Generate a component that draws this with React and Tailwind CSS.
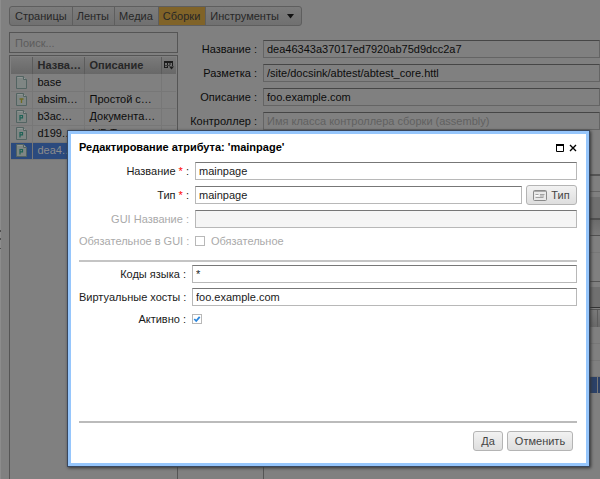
import React from "react";
import { clsx } from "clsx";

const tabs = ["Страницы", "Ленты", "Медиа", "Сборки"];

const assemblies = [
  { name: "base", desc: "", mark: "" },
  { name: "absim…", desc: "Простой с…", mark: "T" },
  { name: "b3ac…", desc: "Документа…", mark: "P" },
  { name: "d199.…", desc: "A/B Т…", mark: "P" },
  { name: "dea4.…", desc: "", mark: "P", selected: true },
];

const fields = [
  { id: "asm-name", label: "Название :", value: "dea46343a37017ed7920ab75d9dcc2a7" },
  { id: "asm-core", label: "Разметка :", value: "/site/docsink/abtest/abtest_core.httl" },
  { id: "asm-desc", label: "Описание :", value: "foo.example.com" },
  { id: "asm-ctl", label: "Контроллер :", value: "", placeholder: "Имя класса контроллера сборки (assembly)" },
];

const dimInput =
  "h-[18px] w-full min-w-0 border border-[#646464] border-t-[#464646] bg-[#808080] px-[3px] text-[11px] text-[#0c0c0c] outline-none placeholder:text-[#606060]";
const dialogInput =
  "h-[18px] w-full min-w-0 border border-[#b8b8b8] border-t-[#777] bg-white px-[3px] text-[11px] text-[#1a1a1a] outline-none disabled:bg-[#f5f5f5]";
const dialogButton =
  "flex h-5 items-center justify-center rounded-[3px] border border-[#b4b4b4] bg-linear-to-b from-[#f2f2f2] to-[#dedede] text-[#444]";

function FileIcon({ mark }) {
  return (
    <svg width="11" height="13" viewBox="0 0 11 13" aria-hidden="true">
      <path d="M.5.5h7l3 3v9H.5z" fill="#7f8684" stroke="#536462" />
      <path d="M1.500 1.500h5" stroke="#8f9694" />
      <path d="M7.500.5v3h3" fill="#959b99" stroke="#536462" />
      {mark === "P" && <path d="M4 10.500V5.500h2.500v2.300H4.500" fill="none" stroke="#1f6256" strokeWidth="1.200" />}
      {mark === "T" && <path d="M3.500 6h4M5.500 6v4" fill="none" stroke="#6e6a22" strokeWidth="1.300" />}
    </svg>
  );
}

function ColumnsIcon() {
  return (
    <svg width="10" height="9" viewBox="0 0 10 9" aria-hidden="true">
      <path d="M.5 7V.5h8V5M3.500 1v6M6 1v3M.5 6.500h3.500" fill="none" stroke="#1c1c1c" />
      <path d="M0 1h9" stroke="#1c1c1c" strokeWidth="2" />
      <path d="M1 4.500h5" stroke="#3c3c3c" />
      <path d="M5 5.500h5L7.500 8.500z" fill="#1c1c1c" />
    </svg>
  );
}

function CardIcon() {
  return (
    <svg width="14" height="11" viewBox="0 0 14 11" aria-hidden="true">
      <rect x=".5" y=".5" width="13" height="10" rx="1" fill="#e9e9e9" stroke="#8a8a8a" />
      <path d="M1 1.500h12" stroke="#aaa" />
      <path d="M2.500 4.500h3M2.500 7.500h8M7 4.500h4.500M7 6h4" stroke="#a2a2a2" />
      <path d="M2.500 5.500h3" stroke="#fff" />
    </svg>
  );
}

function Check({ id, checked, disabled }) {
  return (
    <span className="relative flex size-[10px]">
      <input
        id={id}
        type="checkbox"
        defaultChecked={checked}
        disabled={disabled}
        className="peer size-[10px] appearance-none border border-[#b8b8b8] bg-white"
      />
      <svg
        viewBox="0 0 10 10"
        aria-hidden="true"
        className="pointer-events-none absolute inset-0 hidden size-[10px] peer-checked:block"
      >
        <path d="M2.300 5l1.900 2L7.700 2.800" fill="none" stroke="#2a86dc" strokeWidth="1.800" />
      </svg>
    </span>
  );
}

function Label({ htmlFor, children, required, muted }) {
  return (
    <label htmlFor={htmlFor} className={clsx("text-right whitespace-nowrap", muted ? "text-[#aaa]" : "text-[#1a1a1a]")}>
      {children}
      {required && <span className="text-[#f00]"> *</span>} :
    </label>
  );
}

function Toolbar() {
  return (
    <nav className="ml-[9px] flex h-5 w-fit overflow-hidden rounded-[3px] border border-[#5e5e5e] bg-linear-to-b from-[#7c7c7c] to-[#707070] text-[#272727]">
      {tabs.map((t) => (
        <button
          key={t}
          type="button"
          className={clsx("border-r border-[#5e5e5e] pr-[5px] pl-1 first:pl-[5px]", t === "Сборки" && "bg-[#806328]")}
        >
          {t}
        </button>
      ))}
      <button type="button" className="flex items-center gap-2 pr-[7px] pl-1">
        Инструменты
        <svg width="7" height="5" viewBox="0 0 7 5" aria-hidden="true">
          <path d="M0 0h7L3.500 4.500z" fill="#111" />
        </svg>
      </button>
    </nav>
  );
}

function AssemblyList() {
  return (
    <aside className="flex w-[169px] shrink-0 flex-col gap-[2px]">
      <input
        type="search"
        aria-label="Поиск"
        placeholder="Поиск..."
        className="h-[21px] w-full border border-[#555] bg-[#808080] px-[5px] text-[11px] outline-none placeholder:text-[#5c5c5c]"
      />
      <div className="flex-1 border border-b-0 border-[#555] p-px">
        <table className="w-full table-fixed border-collapse">
          <colgroup>
            <col className="w-[21px]" />
            <col className="w-[52px]" />
            <col />
            <col className="w-[15px]" />
          </colgroup>
          <thead>
            <tr className="h-[17px] bg-linear-to-b from-[#7a7a7a] to-[#686868] text-left text-[#272727]">
              <th className="border-r border-[#5c5c5c]" />
              <th className="truncate border-r border-[#5c5c5c] pl-[5px]">Назва…</th>
              <th className="border-r border-[#5c5c5c] pl-[5px]">Описание</th>
              <th>
                <div className="flex justify-center">
                  <ColumnsIcon />
                </div>
              </th>
            </tr>
          </thead>
          <tbody>
            {assemblies.map((a) => (
              <tr
                key={a.name}
                className={clsx("h-[17px] border-b border-[#777]", a.selected ? "bg-[#2b4a7e] text-[#8c8c8c]" : "text-[#0c0c0c]")}
              >
                <td className="border-r border-[#777] p-0">
                  <div className="flex justify-center">
                    <FileIcon mark={a.mark} />
                  </div>
                </td>
                <td className="overflow-hidden border-r border-[#777] p-0 pl-[5px] whitespace-nowrap">{a.name}</td>
                <td className="overflow-hidden border-r border-[#777] p-0 pl-[5px] whitespace-nowrap">{a.desc}</td>
                <td className="p-0" />
              </tr>
            ))}
          </tbody>
        </table>
      </div>
    </aside>
  );
}

function AssemblyEditor() {
  return (
    <main className="flex min-w-0 flex-1 flex-col pt-2">
      <form className="grid grid-cols-[79px_1fr] items-center gap-x-[6px] gap-y-[6px]">
        {fields.map((f) => (
          <React.Fragment key={f.id}>
            <label htmlFor={f.id} className="text-right text-[#0c0c0c]">
              {f.label}
            </label>
            <input id={f.id} defaultValue={f.value} placeholder={f.placeholder} className={dimInput} />
          </React.Fragment>
        ))}
      </form>
      <div className="mt-11 ml-[85px] flex flex-1 flex-col border-l border-[#555]">
        <div className="h-[18px] border-t-2 border-b border-[#555] border-b-[#646464]" />
        <div className="mt-[5px] h-[21px] bg-[#707070]" />
        <div className="h-[18px] border-t-2 border-b border-[#505050] bg-linear-to-b from-[#6c6c6c] to-[#7a7a7a]" />
        <div className="h-[17px] border-b border-[#777]" />
        <div className="h-[29px] border-b border-[#555]" />
        <div className="mt-[5px] h-[21px] border-b border-[#333] bg-[#707070]" />
        <div className="mt-px flex h-[18px] justify-end border-t border-[#555] bg-linear-to-b from-[#7a7a7a] to-[#686868] pr-[2px]">
          <div className="border-r border-[#5c5c5c]" />
        </div>
        <div className="h-[17px] border-b border-[#777]" />
        <div className="h-[17px] border-b border-[#777]" />
        <div className="h-4 border-b border-[#777]" />
        <div className="flex h-4 justify-end bg-[#2b4168] pr-[2px]">
          <div className="border-r border-[#777]" />
        </div>
      </div>
    </main>
  );
}

function AttributeDialog() {
  return (
    <section
      role="dialog"
      aria-labelledby="dialog-title"
      className="absolute top-[130px] right-[10px] left-[67px] border border-[#39485f] bg-white shadow-[1px_1px_3px_#333]"
    >
      <div className="flex flex-col border-[3px] border-[#96c6fc] pt-[7px] pr-[9px] pb-3 pl-2">
        <header className="flex h-[13px] items-center justify-between">
          <h1 id="dialog-title" className="font-bold text-black">
            Редактирование атрибута: 'mainpage'
          </h1>
          <div className="flex gap-[5px]">
            <button type="button" aria-label="Развернуть">
              <svg width="8" height="8" viewBox="0 0 8 8" className="block">
                <path d="M.5 1v6.500h7V1" fill="none" stroke="#000" />
                <path d="M0 1h8" stroke="#000" strokeWidth="2" />
              </svg>
            </button>
            <button type="button" aria-label="Закрыть">
              <svg width="8" height="8" viewBox="0 0 8 8" className="block">
                <path d="M1 1l6 6M7 1L1 7" stroke="#000" strokeWidth="1.400" />
              </svg>
            </button>
          </div>
        </header>

        <div className="mt-2 grid grid-cols-[110px_1fr] items-center gap-x-[6px] gap-y-[5px]">
          <Label htmlFor="attr-name" required>Название</Label>
          <input id="attr-name" defaultValue="mainpage" className={dialogInput} />

          <Label htmlFor="attr-type" required>Тип</Label>
          <div className="flex items-center gap-1">
            <input id="attr-type" defaultValue="mainpage" className={dialogInput} />
            <button type="button" className={clsx(dialogButton, "w-[51px] shrink-0 gap-1")}>
              <CardIcon />
              Тип
            </button>
          </div>

          <Label htmlFor="attr-gui" muted>GUI Название</Label>
          <input id="attr-gui" disabled className={dialogInput} />

          <Label htmlFor="attr-required" muted>Обязательное в GUI</Label>
          <div className="flex h-4 items-center gap-[6px] text-[#aaa]">
            <Check id="attr-required" disabled />
            <label htmlFor="attr-required">Обязательное</label>
          </div>
        </div>

        <hr className="mt-[11px] border-t-2 border-[#c4c4c4]" />

        <div className="mt-[3px] grid grid-cols-[107px_1fr] items-center gap-x-[6px] gap-y-[5px]">
          <Label htmlFor="attr-lang">Коды языка</Label>
          <input id="attr-lang" defaultValue="*" className={dialogInput} />
          <Label htmlFor="attr-hosts">Виртуальные хосты</Label>
          <input id="attr-hosts" defaultValue="foo.example.com" className={dialogInput} />
          <Label htmlFor="attr-active">Активно</Label>
          <div className="flex h-4 items-center">
            <Check id="attr-active" checked />
          </div>
        </div>

        <hr className="mt-[94px] border-t-2 border-[#bbb]" />

        <footer className="mt-2 flex justify-end gap-1 pr-1">
          <button type="button" className={clsx(dialogButton, "w-[30px]")}>Да</button>
          <button type="button" className={clsx(dialogButton, "w-[66px]")}>Отменить</button>
        </footer>
      </div>
    </section>
  );
}

export default function App() {
  return (
    <div className="relative flex min-h-screen overflow-hidden bg-[#808080] font-['Liberation_Sans',Arial,sans-serif] text-[11px] leading-[13px]">
      <div className="w-px shrink-0 bg-[#8c8c8c] pt-[230px]">
        <div className="h-[10px] border-y-2 border-[#505050]" />
        <div className="h-[9px] border-b border-[#505050]" />
      </div>
      <div className="-ml-px flex min-w-0 flex-1 flex-col pt-[6px]">
        <Toolbar />
        <div className="mt-[6px] ml-[9px] flex flex-1">
          <AssemblyList />
          <AssemblyEditor />
        </div>
      </div>
      <AttributeDialog />
    </div>
  );
}
